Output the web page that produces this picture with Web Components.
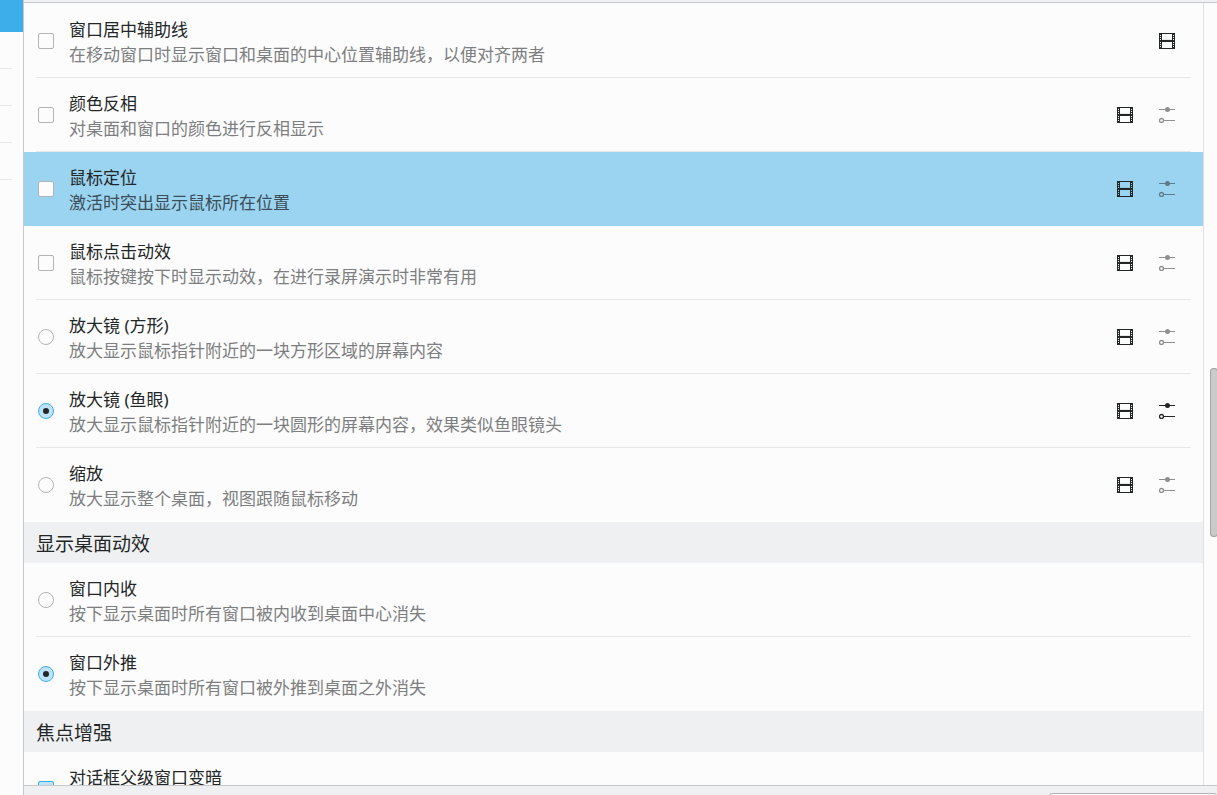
<!DOCTYPE html>
<html lang="zh-CN">
<head>
<meta charset="utf-8">
<title>桌面特效</title>
<style>
  html, body {
    height: 100%;
    margin: 0;
  }
  body {
    overflow: hidden;
    background: #fcfcfc;
    color: #232627;
    font: 17px/25px "Noto Sans", "Noto Sans CJK SC", sans-serif;
  }
</style>
</head>
<body>
<settings-window>
  <side-nav slot="nav"></side-nav>

  <effect-row kind="checkbox" video>
    窗口居中辅助线
    <span slot="description">在移动窗口时显示窗口和桌面的中心位置辅助线，以便对齐两者</span>
  </effect-row>
  <effect-row kind="checkbox" video config>
    颜色反相
    <span slot="description">对桌面和窗口的颜色进行反相显示</span>
  </effect-row>
  <effect-row kind="checkbox" video config selected>
    鼠标定位
    <span slot="description">激活时突出显示鼠标所在位置</span>
  </effect-row>
  <effect-row kind="checkbox" video config>
    鼠标点击动效
    <span slot="description">鼠标按键按下时显示动效，在进行录屏演示时非常有用</span>
  </effect-row>
  <effect-row kind="radio" group="magnify" video config>
    放大镜 (方形)
    <span slot="description">放大显示鼠标指针附近的一块方形区域的屏幕内容</span>
  </effect-row>
  <effect-row kind="radio" group="magnify" video config checked>
    放大镜 (鱼眼)
    <span slot="description">放大显示鼠标指针附近的一块圆形的屏幕内容，效果类似鱼眼镜头</span>
  </effect-row>
  <effect-row kind="radio" group="magnify" video config last>
    缩放
    <span slot="description">放大显示整个桌面，视图跟随鼠标移动</span>
  </effect-row>

  <section-header>显示桌面动效</section-header>
  <effect-row kind="radio" group="show-desktop">
    窗口内收
    <span slot="description">按下显示桌面时所有窗口被内收到桌面中心消失</span>
  </effect-row>
  <effect-row kind="radio" group="show-desktop" checked last>
    窗口外推
    <span slot="description">按下显示桌面时所有窗口被外推到桌面之外消失</span>
  </effect-row>

  <section-header>焦点增强</section-header>
  <effect-row kind="checkbox" checked>
    对话框父级窗口变暗
  </effect-row>
</settings-window>

<script>
class SettingsWindow extends HTMLElement {
  constructor() {
    super();
    this.attachShadow({ mode: 'open' });
    this.shadowRoot.innerHTML = `
      <style>
        :host {
          display: flex;
          height: 100vh;
        }
        main {
          flex: 1;
          min-width: 0;
          display: flex;
          flex-direction: column;
          background: #eff0f1;
          border-left: 1px solid #c6c8c9;
        }
        .view {
          flex: 1;
          min-height: 0;
          display: flex;
          margin-top: 2px;
          background: #fcfcfc;
          border-top: 1px solid #c6c8c9;
          border-bottom: 1px solid #c6c8c9;
        }
        .list {
          flex: 1;
          min-width: 0;
          padding-top: 1px;
          overflow: hidden;
          border-right: 1px solid #dfe0e1;
        }
        footer {
          height: 9px;
          display: flex;
          justify-content: flex-end;
          overflow: hidden;
        }
        footer button {
          width: 168px;
          height: 32px;
          margin: 7px 0 0;
          background: #fcfcfc;
          border: 1px solid #b2b4b5;
          border-radius: 3px;
        }
      </style>
      <slot name="nav"></slot>
      <main>
        <div class="view">
          <div class="list"><slot></slot></div>
          <scroll-track></scroll-track>
        </div>
        <footer><button type="button"></button></footer>
      </main>
    `;
  }

  connectedCallback() {
    // Radios sit in separate shadow roots, so the groups are kept in sync here.
    this.addEventListener('effect-picked', (e) => {
      const group = e.target.getAttribute('group');
      this.querySelectorAll(`effect-row[group="${group}"]`).forEach((row) => {
        if (row !== e.target) row.uncheck();
      });
    });
  }
}

class SideNav extends HTMLElement {
  constructor() {
    super();
    this.attachShadow({ mode: 'open' });
    this.shadowRoot.innerHTML = `
      <style>
        :host {
          display: block;
          width: 23px;
          background: #fcfcfc;
        }
        .current {
          height: 32px;
          background: #3daee9;
        }
        .item {
          height: 36px;
          margin-right: 11px;
          border-bottom: 1px solid #e8e8e8;
        }
      </style>
      <div class="current"></div>
      <div class="item"></div>
      <div class="item"></div>
      <div class="item"></div>
      <div class="item"></div>
    `;
  }
}

class ScrollTrack extends HTMLElement {
  constructor() {
    super();
    this.attachShadow({ mode: 'open' });
    this.shadowRoot.innerHTML = `
      <style>
        :host {
          display: flex;
          flex-direction: column;
          width: 13px;
          overflow: hidden;
        }
        .before { flex: 365; }
        .after { flex: 248; }
        .thumb {
          flex: 169;
          width: 8px;
          margin-left: 6px;
          background: #c9cac9;
          box-shadow: inset 0 0 0 1px #a3a5a5;
          border-radius: 4px;
        }
      </style>
      <div class="before"></div>
      <div class="thumb"></div>
      <div class="after"></div>
    `;
  }
}

class SectionHeader extends HTMLElement {
  constructor() {
    super();
    this.attachShadow({ mode: 'open' });
    this.shadowRoot.innerHTML = `
      <style>
        :host {
          display: block;
          padding: 4px 12px 0;
          background: #eff0f1;
        }
        h2 {
          margin: 0;
          font-size: 19px;
          font-weight: normal;
          line-height: 37px;
        }
      </style>
      <h2><slot></slot></h2>
    `;
  }
}

class IconButton extends HTMLElement {
  constructor() {
    super();
    this.attachShadow({ mode: 'open' });
  }

  connectedCallback() {
    this.shadowRoot.innerHTML = `
      <style>
        :host {
          display: block;
        }
        button {
          display: block;
          padding: 8px;
          border: 0;
          background: none;
          color: inherit;
        }
        button:disabled {
          opacity: 0.5;
        }
        svg {
          display: block;
        }
      </style>
      <button type="button" aria-label="${this.getAttribute('label')}"
        ${this.hasAttribute('disabled') ? 'disabled' : ''}>${IconButton.icons[this.getAttribute('icon')]}</button>
    `;
  }
}

IconButton.icons = {
  film: `
    <svg width="16" height="16" viewBox="0 0 16 16" shape-rendering="crispEdges">
      <path fill="currentColor" fill-rule="evenodd" d="M0 0h16v16H0z
        M3 1v6h10V1z M3 9v6h10V9z
        M1 2v1h1V2z M1 4v1h1V4z M1 6v1h1V6z M1 9v1h1V9z M1 11v1h1v-1z M1 13v1h1v-1z
        M14 2v1h1V2z M14 4v1h1V4z M14 6v1h1V6z M14 9v1h1V9z M14 11v1h1v-1z M14 13v1h1v-1z"/>
      <path fill="#000" fill-opacity="0.08" d="M3 6h10v1H3z"/>
    </svg>`,
  sliders: `
    <svg width="16" height="16" viewBox="0 0 16 16" fill="none" stroke="currentColor">
      <path d="M0 2.5h16M5 13.5h11"/>
      <circle cx="8.5" cy="2.5" r="2.5" fill="currentColor" stroke="none"/>
      <circle cx="2.5" cy="13.5" r="2" stroke-width="1.3"/>
    </svg>`
};

class EffectRow extends HTMLElement {
  constructor() {
    super();
    this.attachShadow({ mode: 'open' });
  }

  connectedCallback() {
    const kind = this.getAttribute('kind');
    const checked = this.hasAttribute('checked');

    let buttons = '';
    if (this.hasAttribute('video')) {
      buttons += '<icon-button icon="film" label="预览"></icon-button>';
    }
    if (this.hasAttribute('config')) {
      buttons += `<icon-button icon="sliders" label="配置" ${checked ? '' : 'disabled'}></icon-button>`;
    }

    this.shadowRoot.innerHTML = `
      <style>
        :host {
          display: block;
          padding: 0 12px;
        }
        :host([selected]) {
          background: #9bd4f1;
        }
        .row {
          display: flex;
          align-items: center;
          height: 73px;
          padding: 0 8px 0 2px;
          border-bottom: 1px solid #e8e8e9;
        }
        :host([selected]) .row,
        :host([last]) .row {
          border-color: transparent;
        }
        input {
          appearance: none;
          flex: none;
          display: grid;
          place-content: center;
          box-sizing: border-box;
          width: 16px;
          height: 16px;
          margin: 0;
          background: #fcfcfc;
          border: 1px solid #b2b3b4;
          border-radius: 2px;
        }
        input[type="radio"] {
          border-radius: 50%;
        }
        input:checked {
          border-color: #3daee9;
          background: #bee3f6;
        }
        input[type="radio"]:checked::before {
          content: "";
          width: 6px;
          height: 6px;
          border-radius: 50%;
          background: #232627;
        }
        .text {
          flex: 1;
          min-width: 0;
          margin-left: 15px;
          padding-top: 2px;
        }
        label, .description {
          display: block;
        }
        .description {
          min-height: 25px;
          color: #7c7e7f;
        }
        :host([selected]) .description {
          color: #3b4d56;
        }
        .buttons {
          display: flex;
          gap: 10px;
        }
      </style>
      <div class="row">
        <input type="${kind}" id="toggle" ${checked ? 'checked' : ''}>
        <div class="text">
          <label for="toggle"><slot></slot></label>
          <div class="description"><slot name="description"></slot></div>
        </div>
        <div class="buttons">${buttons}</div>
      </div>
    `;

    this.input = this.shadowRoot.querySelector('input');
    this.input.addEventListener('change', () => {
      if (kind === 'radio') {
        this.dispatchEvent(new CustomEvent('effect-picked', { bubbles: true }));
      }
    });
  }

  uncheck() {
    this.input.checked = false;
  }
}

customElements.define('settings-window', SettingsWindow);
customElements.define('side-nav', SideNav);
customElements.define('scroll-track', ScrollTrack);
customElements.define('section-header', SectionHeader);
customElements.define('icon-button', IconButton);
customElements.define('effect-row', EffectRow);
</script>
</body>
</html>
